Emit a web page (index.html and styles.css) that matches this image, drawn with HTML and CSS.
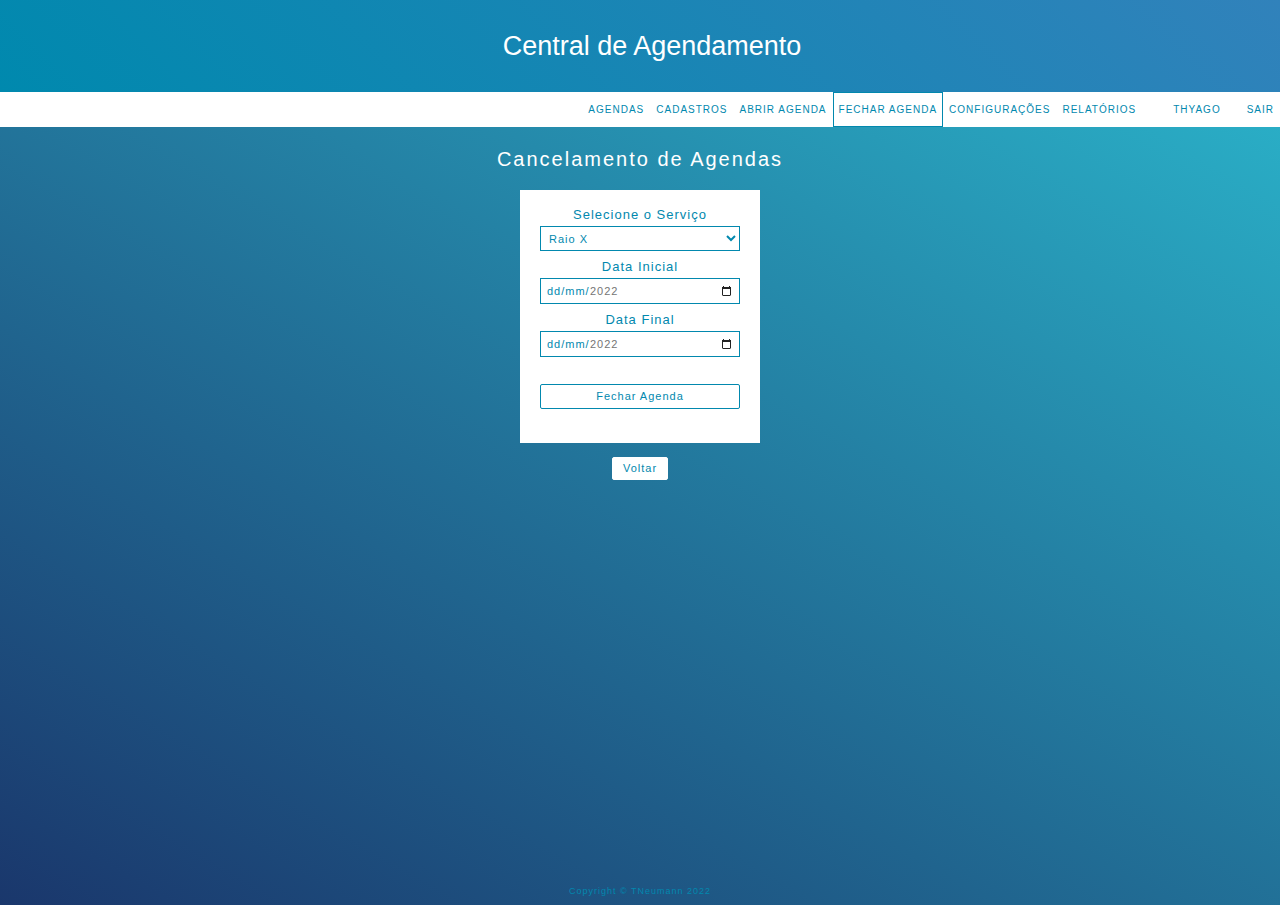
FILE: index.html
```html
<!DOCTYPE html>
<html lang="pt-BR">
<head>
<meta charset="utf-8">
<title>Central de Agendamento</title>
<link rel="stylesheet" href="styles.css">
</head>
<body>
<header class="header">
  <h1 class="header-title">Central de Agendamento</h1>
</header>
<nav class="menu">
  <a class="menu-link" href="#">Agendas</a>
  <a class="menu-link" href="#">Cadastros</a>
  <a class="menu-link" href="#">Abrir Agenda</a>
  <a class="menu-link menu-link-active" href="#">Fechar Agenda</a>
  <a class="menu-link" href="#">Configurações</a>
  <a class="menu-link" href="#">Relatórios</a>
  <a class="menu-link menu-user" href="#">Thyago</a>
  <a class="menu-link menu-exit" href="#">Sair</a>
</nav>
<main class="content">
  <h2 class="page-title">Cancelamento de Agendas</h2>
  <form class="card">
    <label class="label" for="servico">Selecione o Serviço</label>
    <select class="field select" id="servico"><option>Raio X</option></select>
    <label class="label" for="inicial">Data Inicial</label>
    <div class="field date">
      <input class="date-day" id="inicial" type="text" placeholder="dd/mm/">
      <input class="date-year" type="text" value="2022" aria-label="Ano inicial">
      <button class="date-button" type="button" aria-label="Abrir calendário"><svg width="9" height="10" viewBox="0 0 9 10"><path d="M1 0h1v1h5V0h1v1h1v8l-1 1H1L0 9V1h1zM1 3v6h7V3z" fill="#222" fill-rule="evenodd"/></svg></button>
    </div>
    <label class="label" for="final">Data Final</label>
    <div class="field date">
      <input class="date-day" id="final" type="text" placeholder="dd/mm/">
      <input class="date-year" type="text" value="2022" aria-label="Ano final">
      <button class="date-button" type="button" aria-label="Abrir calendário"><svg width="9" height="10" viewBox="0 0 9 10"><path d="M1 0h1v1h5V0h1v1h1v8l-1 1H1L0 9V1h1zM1 3v6h7V3z" fill="#222" fill-rule="evenodd"/></svg></button>
    </div>
    <button class="submit" type="button">Fechar Agenda</button>
  </form>
  <button class="back" type="button">Voltar</button>
</main>
<footer class="footer">Copyright © TNeumann 2022</footer>
</body>
</html>
```
FILE: styles.css
```css
* { box-sizing: border-box; }
body {
  margin: 0;
  min-height: 100vh;
  display: flex;
  flex-direction: column;
  font-family: Arial, "Liberation Sans", sans-serif;
  color: #0288ae;
  background: linear-gradient(30deg, #1a376c, #2bb7cd);
}
.header {
  padding: 30px 0 30px 24px;
  background: linear-gradient(45deg, #0089ae, #3182bb);
  text-align: center;
}
.header-title {
  margin: 0;
  font-size: 27px;
  line-height: 32px;
  font-weight: 400;
  color: #fff;
}
.menu {
  display: flex;
  justify-content: flex-end;
  background: #fff;
}
.menu-link {
  padding: 0 5px;
  border: 1px solid transparent;
  font-size: 10px;
  line-height: 33px;
  letter-spacing: 1px;
  text-transform: uppercase;
  text-decoration: none;
  color: #0288ae;
}
.menu-link-active { border-color: #0288ae; }
.menu-user { margin-left: 25px; }
.menu-exit { margin-left: 14px; }
.content {
  flex: 1;
  display: flex;
  flex-direction: column;
  align-items: center;
}
.page-title {
  margin: 20px 0 19px;
  font-size: 20px;
  line-height: 24px;
  font-weight: 400;
  letter-spacing: 2px;
  color: #fff;
}
.card {
  width: 240px;
  padding: 15px 20px 34px;
  display: flex;
  flex-direction: column;
  background: #fff;
}
.label {
  margin-bottom: 1px;
  font-size: 13px;
  line-height: 20px;
  letter-spacing: 1px;
  text-align: center;
}
.field {
  height: 26px;
  margin-bottom: 6px;
  border: 1px solid #0288ae;
  background: #fff;
}
.select {
  height: 25px;
  padding: 0 4px;
  border-radius: 0;
  font: 11px/14px Arial, "Liberation Sans", sans-serif;
  letter-spacing: 1px;
  color: #0288ae;
}
.date {
  display: flex;
  align-items: center;
  padding: 0 8px 0 6px;
}
.date input {
  padding: 0;
  border: 0;
  background: none;
  font: 11px/14px Arial, "Liberation Sans", sans-serif;
  letter-spacing: 1px;
  color: #757575;
}
.date .date-day { width: 43px; color: #0288ae; }
.date-day::placeholder { color: #0288ae; }
.date-year { width: 40px; }
.date-button {
  display: flex;
  margin-left: auto;
  padding: 0;
  border: 0;
  background: none;
}
.submit, .back {
  border: 1px solid #0288ae;
  border-radius: 2px;
  background: #fff;
  font: 11px/15px Arial, "Liberation Sans", sans-serif;
  letter-spacing: 1px;
  color: #0288ae;
}
.submit { margin-top: 21px; padding: 4px; }
.back { margin-top: 14px; padding: 3px 10px; border-color: #fff; }
.footer {
  padding: 8px;
  font-size: 9px;
  line-height: 12px;
  letter-spacing: 1px;
  text-align: center;
}
```
